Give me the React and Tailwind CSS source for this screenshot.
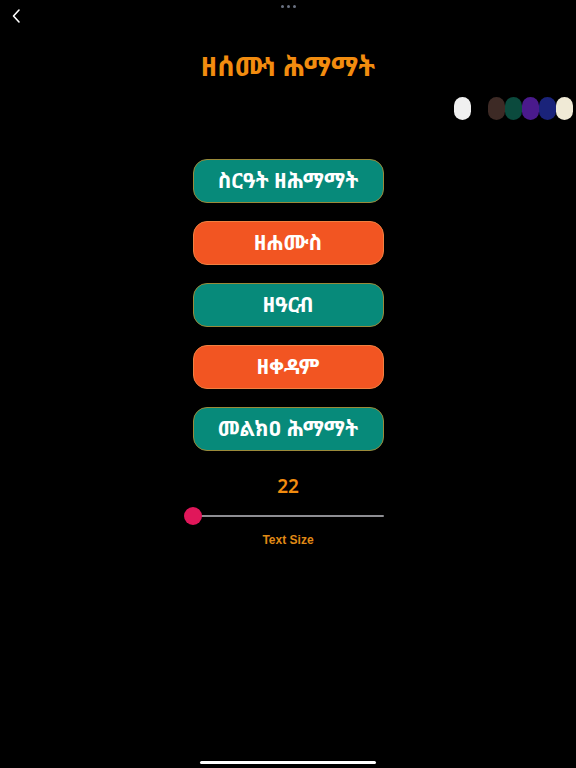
import { useState } from "react";

const swatches = ["#f0f0f0", "#000000", "#3d2a25", "#0b4a3d", "#4a1a8c", "#1a237a", "#f0ead6"];

const menu = [
  { label: "ስርዓት ዘሕማማት", tone: "teal" },
  { label: "ዘሐሙስ", tone: "orange" },
  { label: "ዘዓርብ", tone: "teal" },
  { label: "ዘቀዳም", tone: "orange" },
  { label: "መልክዐ ሕማማት", tone: "teal" },
];

export default function App() {
  const [size, setSize] = useState(22);

  return (
    <main className="relative flex h-[768px] w-[576px] flex-col items-center overflow-hidden bg-black font-['Noto_Sans','Noto_Sans_Ethiopic',sans-serif]">
      <div className="mt-[5px] flex gap-[3px]">
        <span className="h-[3px] w-[3px] rounded-full bg-gray-500" />
        <span className="h-[3px] w-[3px] rounded-full bg-gray-500" />
        <span className="h-[3px] w-[3px] rounded-full bg-gray-500" />
      </div>

      <button type="button" className="absolute left-[10px] top-[8px] text-white">
        <svg width="14" height="16" viewBox="0 0 14 16" fill="none">
          <path d="M9 2 L3.5 8 L9 14" stroke="currentColor" strokeWidth="1.6" strokeLinecap="round" strokeLinejoin="round" />
        </svg>
      </button>

      <h1 className="mt-[41px] text-[27px] font-bold leading-[34px] text-[#f28c0f]">ዘሰሙነ ሕማማት</h1>

      <div className="mt-[14px] flex self-end pr-[3px]">
        {swatches.map((color) => (
          <span key={color} className="h-[23px] w-[17px] rounded-full" style={{ backgroundColor: color }} />
        ))}
      </div>

      <div className="mt-[39px] flex flex-col gap-[18px]">
        {menu.map((item) => (
          <button
            key={item.label}
            type="button"
            className={`flex h-[44px] w-[191px] items-center justify-center rounded-[14px] border text-[21px] font-bold text-white ${
              item.tone === "teal" ? "border-[#9a8a3a] bg-[#078a7a]" : "border-[#f08040] bg-[#f25522]"
            }`}
          >
            {item.label}
          </button>
        ))}
      </div>

      <p className="mt-[23px] text-[19px] font-semibold leading-[24px] text-[#f28c0f]">{size}</p>

      <div className="relative mt-[8px] h-[20px] w-[192px]">
        <div className="absolute left-[2px] right-0 top-[9px] h-[2px] rounded bg-[#8e8e93]" />
        <span className="absolute left-[-8px] top-[1px] h-[18px] w-[18px] rounded-full bg-[#e0175a]" />
      </div>

      <p className="mt-[5px] font-['Liberation_Sans',sans-serif] text-[12px] font-bold text-[#e08a15]">Text Size</p>

      <div className="absolute bottom-[4px] left-[200px] h-[3px] w-[176px] rounded-full bg-white" />
    </main>
  );
}
